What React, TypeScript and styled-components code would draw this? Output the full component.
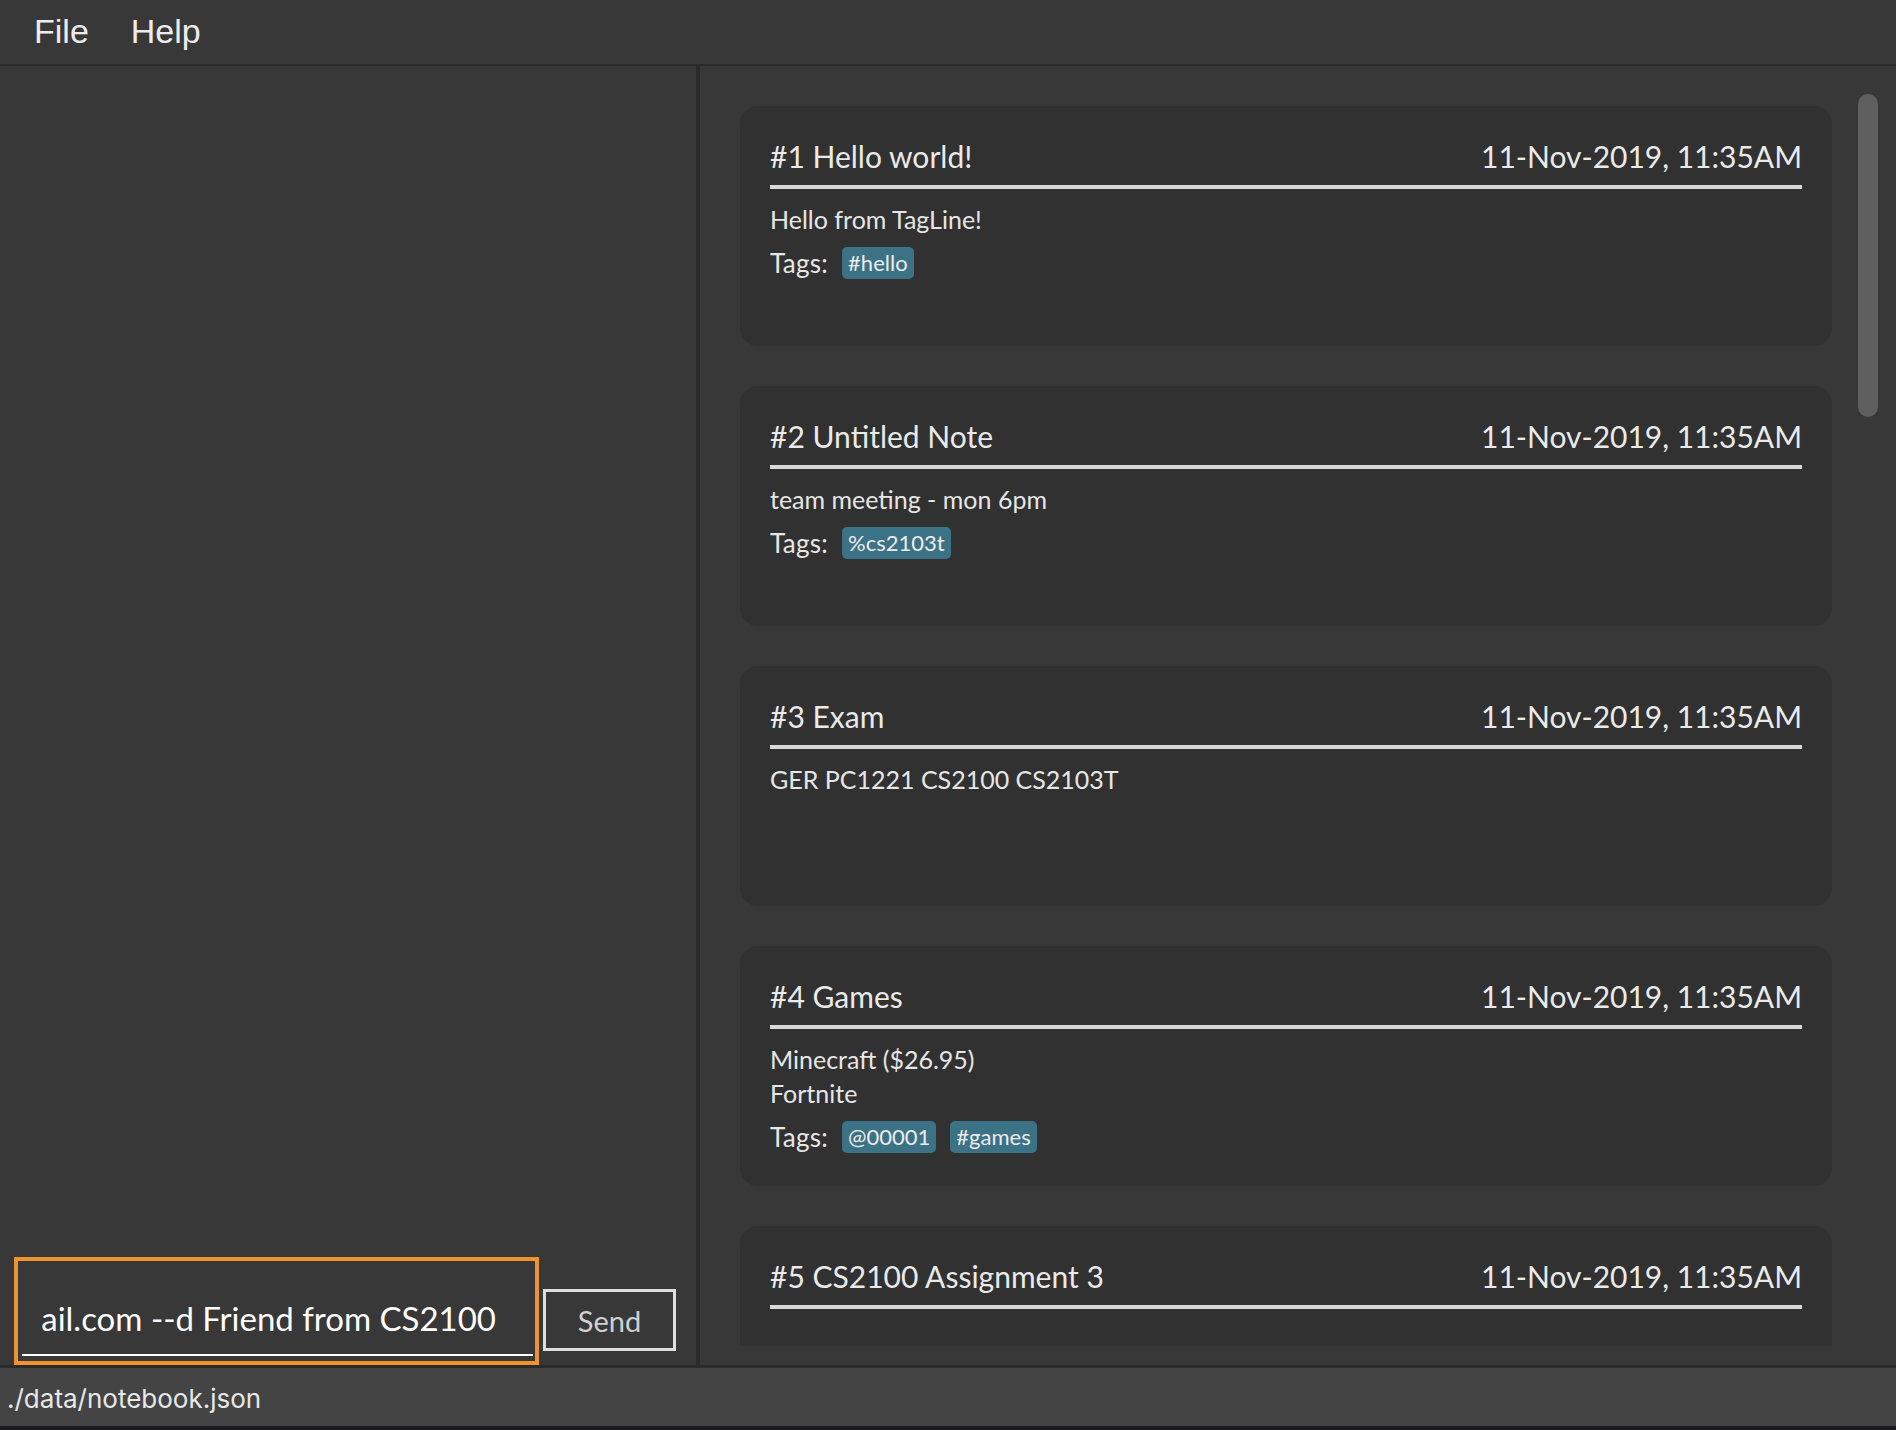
import React from "react";
import styled, { createGlobalStyle } from "styled-components";

const GlobalStyle = createGlobalStyle`
  html, body { margin: 0; padding: 0; background: #383838; }
  body { font-family: Lato, "Noto Sans", sans-serif; }
  * { box-sizing: border-box; }
`;

const Window = styled.div`
  width: 1896px;
  height: 1430px;
  display: flex;
  flex-direction: column;
  background: #383838;
  overflow: hidden;
`;

const MenuBar = styled.div`
  height: 66px;
  flex: none;
  display: flex;
  align-items: center;
  padding: 0 0 2px 13px;
  border-bottom: 2px solid #2a2a2a;
  background: #383838;
`;

const MenuItem = styled.div`
  font-family: "Liberation Sans", Arial, sans-serif;
  font-size: 34px;
  color: #ececec;
  padding: 0 21px;
  line-height: 64px;
`;

const Main = styled.div`
  flex: 1;
  display: flex;
  min-height: 0;
`;

const LeftPanel = styled.div`
  width: 696px;
  flex: none;
  display: flex;
  flex-direction: column;
  justify-content: flex-end;
  padding-left: 14px;
  background: #383838;
`;

const CommandRow = styled.div`
  display: flex;
  align-items: flex-end;
`;

const CommandBox = styled.div`
  width: 525px;
  height: 108px;
  border: 4px solid #f0932f;
  padding: 0 2px 5px 4px;
  display: flex;
  flex-direction: column;
  justify-content: flex-end;
`;

const CommandField = styled.div`
  border-bottom: 2px solid #ffffff;
  padding: 0 0 16px 20px;
`;

const TextClip = styled.div`
  display: flex;
  justify-content: flex-end;
  overflow: hidden;
  padding-right: 37px;
`;

const CommandText = styled.span`
  font-family: Lato, sans-serif;
  font-size: 33px;
  line-height: 40px;
  color: #ffffff;
  white-space: nowrap;
  flex: none;
`;

const SendButton = styled.button`
  width: 133px;
  height: 62px;
  margin: 0 0 14px 4px;
  border: 3px solid #dedede;
  background: transparent;
  color: #d0d0d0;
  font-family: Lato, sans-serif;
  font-size: 29px;
  padding: 0;
`;

const Divider = styled.div`
  width: 4px;
  flex: none;
  background: #2b2b2b;
`;

const RightPanel = styled.div`
  flex: 1;
  display: flex;
  padding: 20px 18px 19px 40px;
  min-height: 0;
`;

const CardList = styled.div`
  flex: 1;
  display: flex;
  flex-direction: column;
  gap: 40px;
  padding-top: 20px;
  overflow: hidden;
`;

const ScrollTrack = styled.div`
  width: 20px;
  flex: none;
  margin-left: 26px;
  padding-top: 8px;
`;

const ScrollThumb = styled.div`
  width: 20px;
  height: 323px;
  border-radius: 10px;
  background: #5f5f5f;
`;

const Card = styled.div`
  flex: none;
  height: 240px;
  background: #313131;
  border-radius: 18px;
  padding: 32px 30px 0 30px;
`;

const CardHeader = styled.div`
  display: flex;
  justify-content: space-between;
  align-items: baseline;
  padding-bottom: 11px;
  border-bottom: 4px solid #d8d8d8;
`;

const Title = styled.span`
  font-size: 30px;
  line-height: 36px;
  color: #eaeaea;
`;

const Body = styled.div`
  margin-top: 13px;
  font-size: 25px;
  line-height: 34px;
  color: #e6e6e6;
`;

const TagsRow = styled.div`
  margin-top: 11px;
  display: flex;
  align-items: center;
  height: 32px;
  gap: 14px;
`;

const TagsLabel = styled.span`
  font-size: 26px;
  color: #e6e6e6;
  letter-spacing: 0.3px;
  margin-right: 0px;
`;

const Chip = styled.span`
  height: 32px;
  line-height: 32px;
  padding: 0 6px;
  border-radius: 5px;
  background: #3b7285;
  color: #ececec;
  font-size: 22px;
`;

const StatusBar = styled.div`
  flex: none;
  height: 61px;
  border-top: 3px solid #2b2b2b;
  background: #444444;
  padding-left: 7px;
  display: flex;
  align-items: center;
`;

const StatusText = styled.span`
  font-family: Inter, sans-serif;
  font-size: 26px;
  color: #e8e8e8;
  margin-top: 2px;
`;

const BottomStrip = styled.div`
  flex: none;
  height: 4px;
  background: #1c1c1f;
`;

type Note = {
  id: number;
  title: string;
  lines: string[];
  tags: string[];
};

const notes: Note[] = [
  { id: 1, title: "Hello world!", lines: ["Hello from TagLine!"], tags: ["#hello"] },
  { id: 2, title: "Untitled Note", lines: ["team meeting - mon 6pm"], tags: ["%cs2103t"] },
  { id: 3, title: "Exam", lines: ["GER PC1221 CS2100 CS2103T"], tags: [] },
  { id: 4, title: "Games", lines: ["Minecraft ($26.95)", "Fortnite"], tags: ["@00001", "#games"] },
  { id: 5, title: "CS2100 Assignment 3", lines: [], tags: [] },
];

const DATE = "11-Nov-2019, 11:35AM";

export default function App() {
  return (
    <>
      <GlobalStyle />
      <Window>
        <MenuBar>
          <MenuItem>File</MenuItem>
          <MenuItem>Help</MenuItem>
        </MenuBar>
        <Main>
          <LeftPanel>
            <CommandRow>
              <CommandBox>
                <CommandField>
                  <TextClip>
                    <CommandText>add --t Friend --c bob@gmail.com --d Friend from CS2100</CommandText>
                  </TextClip>
                </CommandField>
              </CommandBox>
              <SendButton>Send</SendButton>
            </CommandRow>
          </LeftPanel>
          <Divider />
          <RightPanel>
            <CardList>
              {notes.map((n) => (
                <Card key={n.id}>
                  <CardHeader>
                    <Title>#{n.id}&nbsp;{n.title}</Title>
                    <Title>{DATE}</Title>
                  </CardHeader>
                  {n.lines.length > 0 && (
                    <Body>
                      {n.lines.map((l) => (
                        <div key={l}>{l}</div>
                      ))}
                    </Body>
                  )}
                  {n.tags.length > 0 && (
                    <TagsRow>
                      <TagsLabel>Tags:</TagsLabel>
                      {n.tags.map((t) => (
                        <Chip key={t}>{t}</Chip>
                      ))}
                    </TagsRow>
                  )}
                </Card>
              ))}
            </CardList>
            <ScrollTrack>
              <ScrollThumb />
            </ScrollTrack>
          </RightPanel>
        </Main>
        <StatusBar>
          <StatusText>./data/notebook.json</StatusText>
        </StatusBar>
        <BottomStrip />
      </Window>
    </>
  );
}
